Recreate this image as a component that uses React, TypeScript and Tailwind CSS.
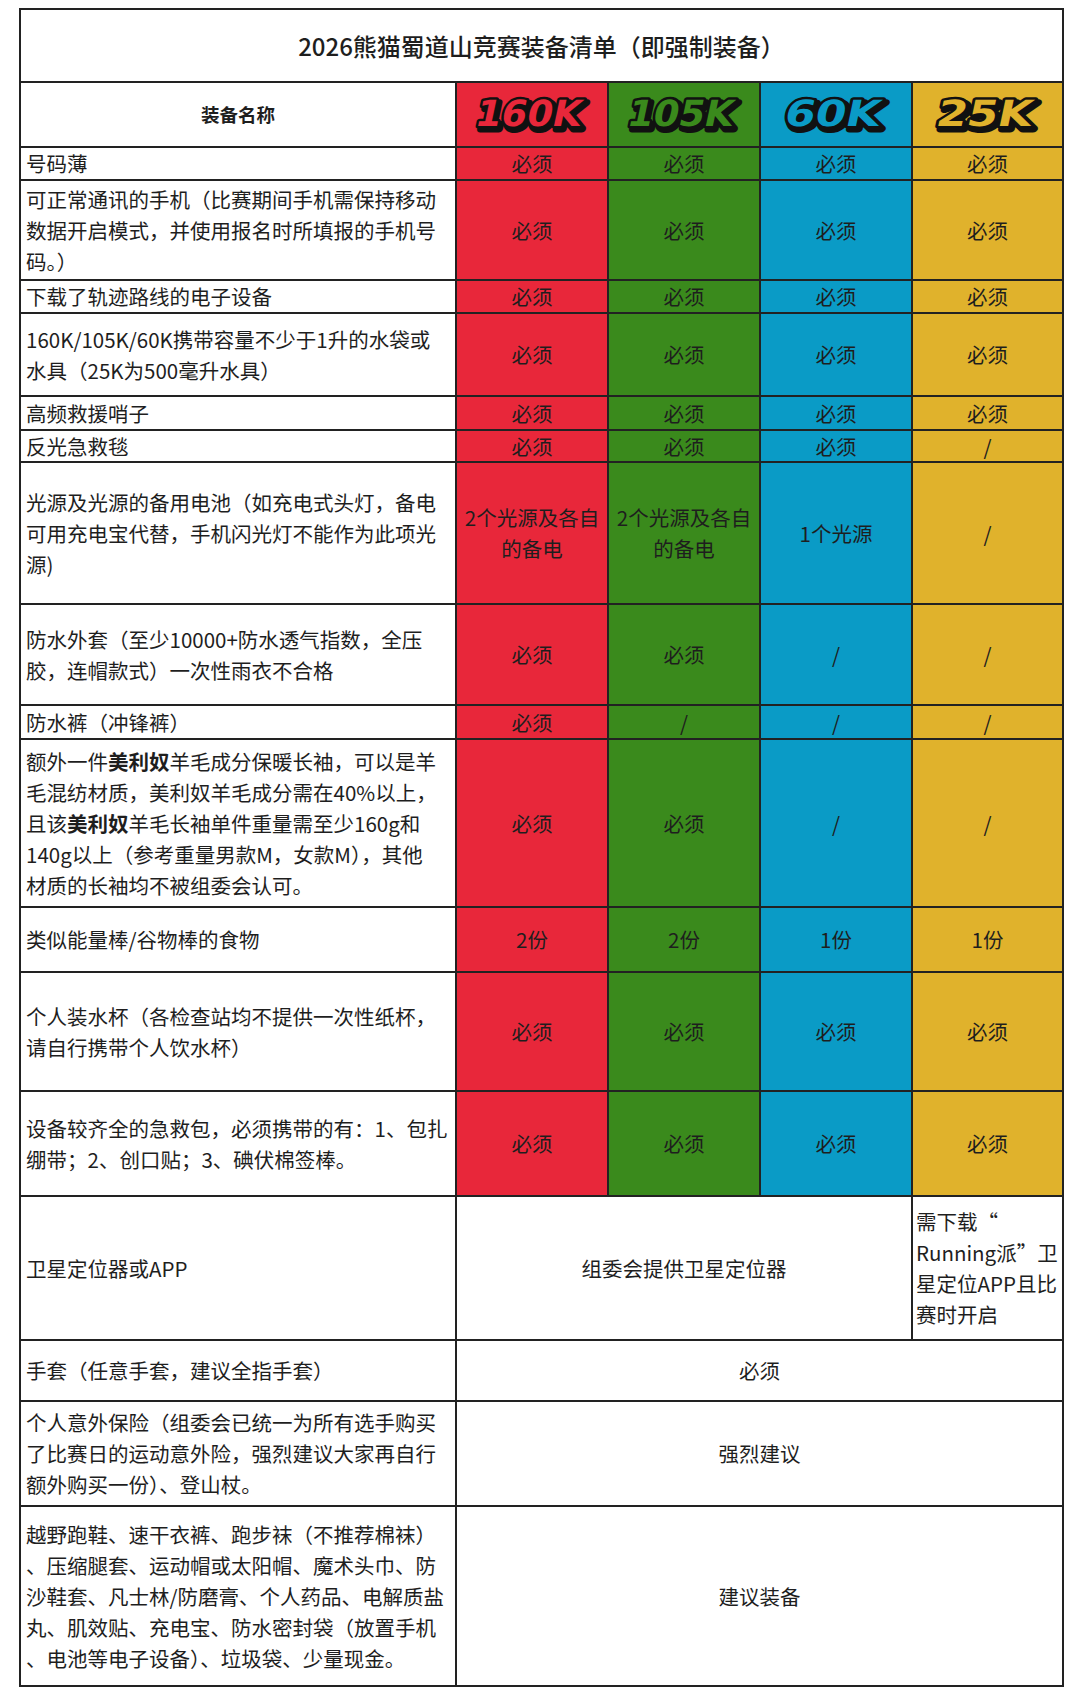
import React from 'react'

const cols = [
  { label: '160K', hex: '#e8273a', bg: 'bg-[#e8273a]', w: 'w-[152px]' },
  { label: '105K', hex: '#3a8a1c', bg: 'bg-[#3a8a1c]', w: 'w-[152px]' },
  { label: '60K', hex: '#0a9bc6', bg: 'bg-[#0a9bc6]', w: 'w-[152px]' },
  { label: '25K', hex: '#e0b22c', bg: 'bg-[#e0b22c]', w: 'w-[151px]' },
]

type Row = {
  h: string
  name: React.ReactNode[]
  vals: React.ReactNode[]
}

const B = ({ children }: { children: React.ReactNode }) => <span className="font-bold">{children}</span>

const rows: Row[] = [
  { h: 'h-[33px]', name: ['号码薄'], vals: ['必须', '必须', '必须', '必须'] },
  {
    h: 'h-[100px]',
    name: ['可正常通讯的手机（比赛期间手机需保持移动', '数据开启模式，并使用报名时所填报的手机号', '码。）'],
    vals: ['必须', '必须', '必须', '必须'],
  },
  { h: 'h-[33px]', name: ['下载了轨迹路线的电子设备'], vals: ['必须', '必须', '必须', '必须'] },
  {
    h: 'h-[83px]',
    name: ['160K/105K/60K携带容量不少于1升的水袋或', '水具（25K为500毫升水具）'],
    vals: ['必须', '必须', '必须', '必须'],
  },
  { h: 'h-[34px]', name: ['高频救援哨子'], vals: ['必须', '必须', '必须', '必须'] },
  { h: 'h-[32px]', name: ['反光急救毯'], vals: ['必须', '必须', '必须', '/'] },
  {
    h: 'h-[142px]',
    name: ['光源及光源的备用电池（如充电式头灯，备电', '可用充电宝代替，手机闪光灯不能作为此项光', '源)'],
    vals: [
      <>2个光源及各自<br />的备电</>,
      <>2个光源及各自<br />的备电</>,
      '1个光源',
      '/',
    ],
  },
  {
    h: 'h-[101px]',
    name: ['防水外套（至少10000+防水透气指数，全压', '胶，连帽款式）一次性雨衣不合格'],
    vals: ['必须', '必须', '/', '/'],
  },
  { h: 'h-[34px]', name: ['防水裤（冲锋裤）'], vals: ['必须', '/', '/', '/'] },
  {
    h: 'h-[168px]',
    name: [
      <>额外一件<B>美利奴</B>羊毛成分保暖长袖，可以是羊</>,
      '毛混纺材质，美利奴羊毛成分需在40%以上，',
      <>且该<B>美利奴</B>羊毛长袖单件重量需至少160g和</>,
      '140g以上（参考重量男款M，女款M），其他',
      '材质的长袖均不被组委会认可。',
    ],
    vals: ['必须', '必须', '/', '/'],
  },
  { h: 'h-[65px]', name: ['类似能量棒/谷物棒的食物'], vals: ['2份', '2份', '1份', '1份'] },
  {
    h: 'h-[119px]',
    name: ['个人装水杯（各检查站均不提供一次性纸杯，', '请自行携带个人饮水杯）'],
    vals: ['必须', '必须', '必须', '必须'],
  },
  {
    h: 'h-[105px]',
    name: ['设备较齐全的急救包，必须携带的有：1、包扎', '绷带；2、创口贴；3、碘伏棉签棒。'],
    vals: ['必须', '必须', '必须', '必须'],
  },
]

const wideRows = [
  { h: 'h-[61px]', name: ['手套（任意手套，建议全指手套）'], val: '必须' },
  {
    h: 'h-[105px]',
    name: ['个人意外保险（组委会已统一为所有选手购买', '了比赛日的运动意外险，强烈建议大家再自行', '额外购买一份）、登山杖。'],
    val: '强烈建议',
  },
  {
    h: 'h-[180px]',
    name: [
      '越野跑鞋、速干衣裤、跑步袜（不推荐棉袜）',
      '、压缩腿套、运动帽或太阳帽、魔术头巾、防',
      '沙鞋套、凡士林/防磨膏、个人药品、电解质盐',
      '丸、肌效贴、充电宝、防水密封袋（放置手机',
      '、电池等电子设备）、垃圾袋、少量现金。',
    ],
    val: '建议装备',
  },
]

// race distance badge: colored italic block numerals with a black outline and drop shadow
function Logo({ label, hex }: { label: string; hex: string }) {
  const len = label.length === 3 ? 95 : 105
  const common = {
    x: 72,
    y: 36,
    textAnchor: 'middle' as const,
    fontFamily: 'DejaVu Sans',
    fontWeight: 900,
    fontSize: 36,
    textLength: len,
    lengthAdjust: 'spacingAndGlyphs' as const,
    strokeLinejoin: 'round' as const,
  }
  return (
    <svg width="140" height="50" viewBox="0 0 140 50" overflow="visible">
      <g transform="skewX(-12)">
        <text {...common} fill="#111" stroke="#111" strokeWidth="7" transform="translate(3,3)">
          {label}
        </text>
        <text {...common} fill={hex} stroke="#111" strokeWidth="5" paintOrder="stroke">
          {label}
        </text>
      </g>
    </svg>
  )
}

function NameCell({ lines }: { lines: React.ReactNode[] }) {
  return (
    <div className="w-[436px] border-r-2 border-[#222] flex flex-col justify-center pl-[5px]">
      {lines.map((l, i) => (
        <span key={i} className="whitespace-nowrap">
          {l}
        </span>
      ))}
    </div>
  )
}

export default function App() {
  return (
    <div className="min-h-screen bg-white pt-[8px] pl-[19px] font-['Noto_Sans_CJK_SC',sans-serif] text-[20.5px] leading-[31px] text-[#1e1e1e]">
      <div className="w-[1045px] border-l-2 border-t-2 border-[#222]">
        {/* title */}
        <div className="h-[73px] border-b-2 border-r-2 border-[#222] flex items-center justify-center">
          <span className="text-[24px] font-medium">2026熊猫蜀道山竞赛装备清单（即强制装备）</span>
        </div>

        {/* header */}
        <div className="h-[65px] border-b-2 border-[#222] flex">
          <div className="w-[436px] border-r-2 border-[#222] flex items-center justify-center">
            <span className="text-[18.5px] font-bold">装备名称</span>
          </div>
          {cols.map((c) => (
            <div key={c.label} className={`${c.w} ${c.bg} border-r-2 border-[#222] flex items-center justify-center`}>
              <Logo label={c.label} hex={c.hex} />
            </div>
          ))}
        </div>

        {rows.map((r, i) => (
          <div key={i} className={`${r.h} border-b-2 border-[#222] flex`}>
            <NameCell lines={r.name} />
            {cols.map((c, j) => (
              <div key={j} className={`${c.w} ${c.bg} border-r-2 border-[#222] flex items-center justify-center text-center`}>
                <span>{r.vals[j]}</span>
              </div>
            ))}
          </div>
        ))}

        {/* satellite */}
        <div className="h-[144px] border-b-2 border-[#222] flex">
          <NameCell lines={['卫星定位器或APP']} />
          <div className="w-[456px] border-r-2 border-[#222] flex items-center justify-center">组委会提供卫星定位器</div>
          <div className="w-[151px] border-r-2 border-[#222] flex flex-col justify-center pl-[3px]">
            <span className="whitespace-nowrap">需下载“</span>
            <span className="whitespace-nowrap">Running派”卫</span>
            <span className="whitespace-nowrap">星定位APP且比</span>
            <span className="whitespace-nowrap">赛时开启</span>
          </div>
        </div>

        {wideRows.map((r, i) => (
          <div key={i} className={`${r.h} border-b-2 border-[#222] flex`}>
            <NameCell lines={r.name} />
            <div className="w-[607px] border-r-2 border-[#222] flex items-center justify-center">{r.val}</div>
          </div>
        ))}
      </div>
    </div>
  )
}
